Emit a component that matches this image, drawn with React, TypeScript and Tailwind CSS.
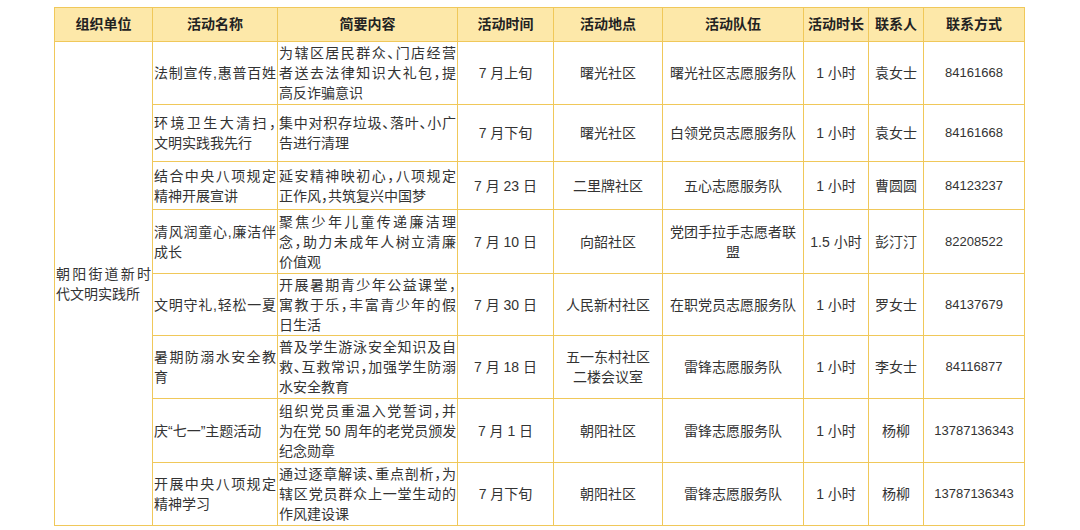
const rows = [
  {
    h: 63,
    name: ["法制宣传,惠普百姓"],
    nameJustify: [true],
    desc: ["为辖区居民群众、门店经营", "者送去法律知识大礼包，提", "高反诈骗意识"],
    time: "7 月上旬",
    place: ["曙光社区"],
    team: ["曙光社区志愿服务队"],
    dur: "1 小时",
    contact: "袁女士",
    phone: "84161668",
  },
  {
    h: 57,
    name: ["环境卫生大清扫，", "文明实践我先行"],
    desc: ["集中对积存垃圾、落叶、小广", "告进行清理"],
    time: "7 月下旬",
    place: ["曙光社区"],
    team: ["白领党员志愿服务队"],
    dur: "1 小时",
    contact: "袁女士",
    phone: "84161668",
  },
  {
    h: 48,
    name: ["结合中央八项规定", "精神开展宣讲"],
    desc: ["延安精神映初心，八项规定", "正作风，共筑复兴中国梦"],
    time: "7 月 23 日",
    place: ["二里牌社区"],
    team: ["五心志愿服务队"],
    dur: "1 小时",
    contact: "曹圆圆",
    phone: "84123237",
  },
  {
    h: 64,
    name: ["清风润童心,廉洁伴", "成长"],
    desc: ["聚焦少年儿童传递廉洁理", "念，助力未成年人树立清廉", "价值观"],
    time: "7 月 10 日",
    place: ["向韶社区"],
    team: ["党团手拉手志愿者联", "盟"],
    dur: "1.5 小时",
    contact: "彭汀汀",
    phone: "82208522",
  },
  {
    h: 62,
    name: ["文明守礼,轻松一夏"],
    nameJustify: [true],
    desc: ["开展暑期青少年公益课堂，", "寓教于乐，丰富青少年的假", "日生活"],
    time: "7 月 30 日",
    place: ["人民新村社区"],
    team: ["在职党员志愿服务队"],
    dur: "1 小时",
    contact: "罗女士",
    phone: "84137679",
  },
  {
    h: 63,
    name: ["暑期防溺水安全教", "育"],
    desc: ["普及学生游泳安全知识及自", "救、互救常识，加强学生防溺", "水安全教育"],
    time: "7 月 18 日",
    place: ["五一东村社区", "二楼会议室"],
    team: ["雷锋志愿服务队"],
    dur: "1 小时",
    contact: "李女士",
    phone: "84116877",
  },
  {
    h: 64,
    name: ["庆“七一”主题活动"],
    nameJustify: [false],
    desc: ["组织党员重温入党誓词，并", "为在党 50 周年的老党员颁发", "纪念勋章"],
    time: "7 月 1 日",
    place: ["朝阳社区"],
    team: ["雷锋志愿服务队"],
    dur: "1 小时",
    contact: "杨柳",
    phone: "13787136343",
  },
  {
    h: 63,
    name: ["开展中央八项规定", "精神学习"],
    desc: ["通过逐章解读、重点剖析，为", "辖区党员群众上一堂生动的", "作风建设课"],
    time: "7 月下旬",
    place: ["朝阳社区"],
    team: ["雷锋志愿服务队"],
    dur: "1 小时",
    contact: "杨柳",
    phone: "13787136343",
  },
];

const headers = ["组织单位", "活动名称", "简要内容", "活动时间", "活动地点", "活动队伍", "活动时长", "联系人", "联系方式"];
const widths = [98, 125, 180, 96, 109, 141, 65, 55, 101];

const cell = "border border-[#f0c85a] p-0 align-middle";

// full lines get spread to the cell width, the last line stays left
function Lines({ lines, justify }: { lines: string[]; justify?: boolean[] }) {
  return (
    <div className="px-[1px] leading-[20px] [font-feature-settings:'halt']">
      {lines.map((l, i) => {
        const j = justify ? justify[i] : i < lines.length - 1;
        return (
          <div key={i} className={j ? "whitespace-nowrap text-justify [text-align-last:justify]" : "whitespace-nowrap text-left"}>
            {l}
          </div>
        );
      })}
    </div>
  );
}

function Center({ lines, mono }: { lines: string[]; mono?: boolean }) {
  return (
    <div className={`text-center leading-[20px] ${mono ? "text-[13px]" : ""}`}>
      {lines.map((l, i) => (
        <div key={i}>{l}</div>
      ))}
    </div>
  );
}

export default function App() {
  return (
    <div className="h-[530px] w-[1080px] overflow-hidden bg-white pt-[7px] pl-[54px] font-['Liberation_Sans','Noto_Sans_CJK_SC',sans-serif] text-[14px] text-[#333333]">
      <table className="table-fixed border-collapse" style={{ width: 970 }}>
        <colgroup>
          {widths.map((w, i) => (
            <col key={i} style={{ width: w }} />
          ))}
        </colgroup>
        <thead>
          <tr className="h-[34px] bg-[#fde8a9]">
            {headers.map((h) => (
              <th key={h} className={`${cell} whitespace-nowrap text-center text-[14px] font-bold text-[#222222]`}>
                {h}
              </th>
            ))}
          </tr>
        </thead>
        <tbody>
          {rows.map((r, i) => (
            <tr key={i} style={{ height: r.h }}>
              {i === 0 && (
                <td rowSpan={rows.length} className={cell}>
                  <Lines lines={["朝阳街道新时", "代文明实践所"]} />
                </td>
              )}
              <td className={cell}>
                <Lines lines={r.name} justify={r.nameJustify} />
              </td>
              <td className={cell}>
                <Lines lines={r.desc} />
              </td>
              <td className={cell}>
                <Center lines={[r.time]} />
              </td>
              <td className={cell}>
                <Center lines={r.place} />
              </td>
              <td className={cell}>
                <Center lines={r.team} />
              </td>
              <td className={cell}>
                <Center lines={[r.dur]} />
              </td>
              <td className={cell}>
                <Center lines={[r.contact]} />
              </td>
              <td className={cell}>
                <Center lines={[r.phone]} mono />
              </td>
            </tr>
          ))}
        </tbody>
      </table>
    </div>
  );
}
